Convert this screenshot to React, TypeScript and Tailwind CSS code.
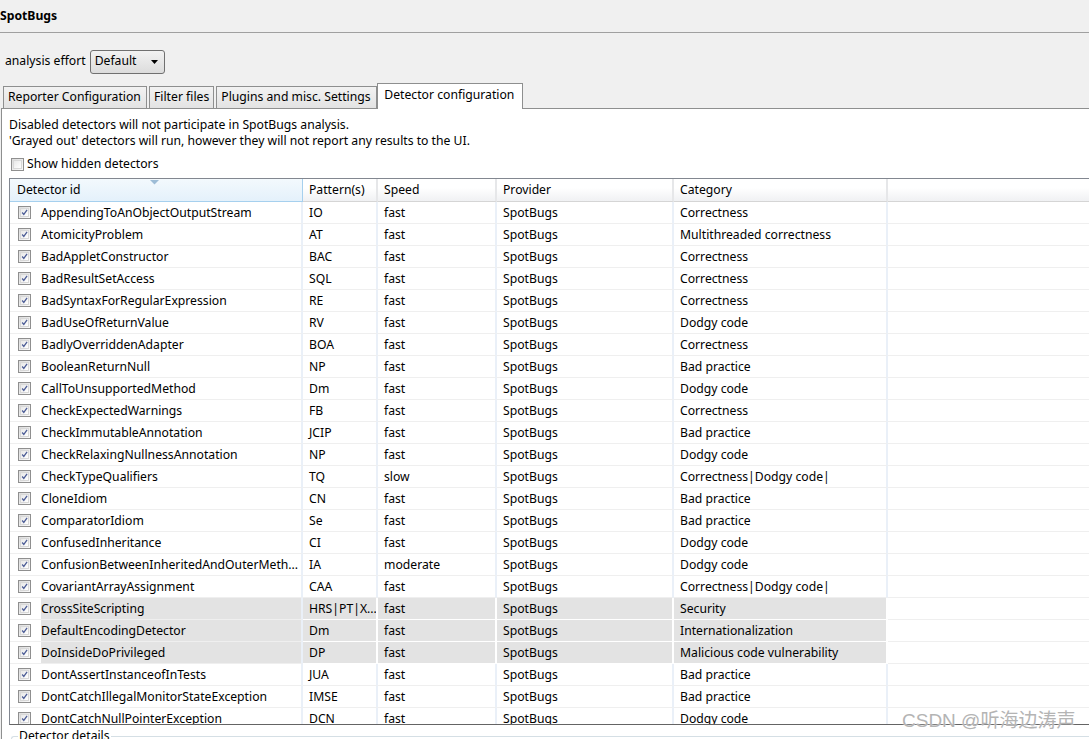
import React from 'react'

type Row = {
  id: string
  pattern: string
  speed: string
  category: string
  grayed?: boolean
}

const rows: Row[] = [
  { id: 'AppendingToAnObjectOutputStream', pattern: 'IO', speed: 'fast', category: 'Correctness' },
  { id: 'AtomicityProblem', pattern: 'AT', speed: 'fast', category: 'Multithreaded correctness' },
  { id: 'BadAppletConstructor', pattern: 'BAC', speed: 'fast', category: 'Correctness' },
  { id: 'BadResultSetAccess', pattern: 'SQL', speed: 'fast', category: 'Correctness' },
  { id: 'BadSyntaxForRegularExpression', pattern: 'RE', speed: 'fast', category: 'Correctness' },
  { id: 'BadUseOfReturnValue', pattern: 'RV', speed: 'fast', category: 'Dodgy code' },
  { id: 'BadlyOverriddenAdapter', pattern: 'BOA', speed: 'fast', category: 'Correctness' },
  { id: 'BooleanReturnNull', pattern: 'NP', speed: 'fast', category: 'Bad practice' },
  { id: 'CallToUnsupportedMethod', pattern: 'Dm', speed: 'fast', category: 'Dodgy code' },
  { id: 'CheckExpectedWarnings', pattern: 'FB', speed: 'fast', category: 'Correctness' },
  { id: 'CheckImmutableAnnotation', pattern: 'JCIP', speed: 'fast', category: 'Bad practice' },
  { id: 'CheckRelaxingNullnessAnnotation', pattern: 'NP', speed: 'fast', category: 'Dodgy code' },
  { id: 'CheckTypeQualifiers', pattern: 'TQ', speed: 'slow', category: 'Correctness|Dodgy code|' },
  { id: 'CloneIdiom', pattern: 'CN', speed: 'fast', category: 'Bad practice' },
  { id: 'ComparatorIdiom', pattern: 'Se', speed: 'fast', category: 'Bad practice' },
  { id: 'ConfusedInheritance', pattern: 'CI', speed: 'fast', category: 'Dodgy code' },
  { id: 'ConfusionBetweenInheritedAndOuterMeth...', pattern: 'IA', speed: 'moderate', category: 'Dodgy code' },
  { id: 'CovariantArrayAssignment', pattern: 'CAA', speed: 'fast', category: 'Correctness|Dodgy code|' },
  { id: 'CrossSiteScripting', pattern: 'HRS|PT|X...', speed: 'fast', category: 'Security', grayed: true },
  { id: 'DefaultEncodingDetector', pattern: 'Dm', speed: 'fast', category: 'Internationalization', grayed: true },
  { id: 'DoInsideDoPrivileged', pattern: 'DP', speed: 'fast', category: 'Malicious code vulnerability', grayed: true },
  { id: 'DontAssertInstanceofInTests', pattern: 'JUA', speed: 'fast', category: 'Bad practice' },
  { id: 'DontCatchIllegalMonitorStateException', pattern: 'IMSE', speed: 'fast', category: 'Bad practice' },
  { id: 'DontCatchNullPointerException', pattern: 'DCN', speed: 'fast', category: 'Dodgy code' },
]

function Check({ checked }: { checked: boolean }) {
  return (
    <span className="flex h-[13px] w-[13px] shrink-0 items-center justify-center border border-[#8f8f8f] bg-gradient-to-br from-[#dcdcdc] to-[#fbfbfb]">
      <span className="flex h-[9px] w-[9px] items-center justify-center border border-[#d8d8d8] bg-gradient-to-br from-[#e8e8e8] to-white">
        {checked && (
          <svg width="9" height="9" viewBox="0 0 9 9" className="-mt-px">
            <path d="M1.5 4.5 L3.6 7 L7.8 1" fill="none" stroke="#4c5c96" strokeWidth="1.6" />
          </svg>
        )}
      </span>
    </span>
  )
}

const cols = 'grid grid-cols-[293px_75px_119px_177px_214px_1fr]'

function HeaderCell({ children, sorted }: { children: React.ReactNode; sorted?: boolean }) {
  if (sorted) {
    return (
      <div className="relative flex h-[23px] items-center border-r border-b border-[#a6d0ee] bg-gradient-to-b from-[#f3f9fd] to-[#e4f1fb] pl-[7px]">
        {children}
        <svg className="absolute left-[140px] top-[1px]" width="9" height="5" viewBox="0 0 9 5">
          <path d="M0 0 H9 L4.5 4.5 Z" fill="#9dbcd6" />
        </svg>
      </div>
    )
  }
  return (
    <div className="flex h-[23px] items-center border-r-2 border-b border-r-[#e6e7e9] border-b-[#d5d5d5] bg-gradient-to-b from-white from-40% to-[#f0f1f3] pl-[6px]">
      {children}
    </div>
  )
}

function Cell({ children, grayed, first }: { children?: React.ReactNode; grayed?: boolean; first?: boolean }) {
  return (
    <div
      className={`flex h-[22px] items-center overflow-hidden whitespace-nowrap border-r-2 border-b border-r-[#eaf0f8] border-b-[#efefef] ${
        first ? 'pl-[8px]' : 'pl-[6px]'
      } ${grayed && !first ? 'bg-[#e3e3e3] border-r-white border-b-white' : ''}`}
    >
      {children}
    </div>
  )
}

const tab =
  'flex h-[22px] shrink-0 items-center whitespace-nowrap border border-b-0 border-[#8e8f8f] bg-gradient-to-b from-[#f2f2f2] to-[#e3e3e3]'

export default function App() {
  return (
    <div className="relative h-[739px] w-[1089px] overflow-hidden bg-[#f0f0f0] font-['Noto_Sans','Noto_Sans_CJK_SC',sans-serif] text-[12.2px] text-black">
      <div className="flex h-[33px] items-center border-b border-[#a0a0a0] font-bold">SpotBugs</div>

      <div className="flex h-[52px] items-center gap-[4px] pl-[5px] pt-[5px]">
        <span>analysis effort</span>
        <div className="flex h-[24px] w-[75px] items-center justify-between rounded-[3px] border border-[#707070] bg-gradient-to-b from-[#f2f2f2] to-[#dcdcdc] pl-[4px] pr-[6px]">
          <span>Default</span>
          <svg width="7" height="4" viewBox="0 0 7 4">
            <path d="M0 0 H7 L3.5 4 Z" fill="#000" />
          </svg>
        </div>
      </div>

      <div className="flex h-[23px] items-end pl-[3px]">
        <div className={`${tab} w-[144px] px-[4px]`}>Reporter Configuration</div>
        <div className={`${tab} ml-[2px] px-[4px]`}>Filter files</div>
        <div className={`${tab} ml-[2px] w-[161px] px-[4px]`}>Plugins and misc. Settings</div>
        <div className="relative -mb-px flex h-[26px] w-[146px] shrink-0 items-center whitespace-nowrap border border-b-0 border-[#8e8f8f] bg-white px-[6px] pb-[3px]">
          Detector configuration
        </div>
      </div>

      <div className="ml-[1px] h-[631px] border-t border-l border-[#8e8f8f] bg-white pl-[7px] pt-[8px]">
        <div className="leading-[16px]">Disabled detectors will not participate in SpotBugs analysis.</div>
        <div className="leading-[16px]">'Grayed out' detectors will run, however they will not report any results to the UI.</div>
        <div className="mt-[6px] flex items-center gap-[3px] pl-[2px]">
          <Check checked={false} />
          <span>Show hidden detectors</span>
        </div>

        <div className="mt-[5px] h-[547px] overflow-hidden border-t border-l border-b border-t-[#828790] border-l-[#828790] border-b-[#646464] bg-white">
          <div className={cols}>
            <HeaderCell sorted>Detector id</HeaderCell>
            <HeaderCell>Pattern(s)</HeaderCell>
            <HeaderCell>Speed</HeaderCell>
            <HeaderCell>Provider</HeaderCell>
            <HeaderCell>Category</HeaderCell>
            <div className="h-[23px] border-b border-[#d5d5d5] bg-gradient-to-b from-white from-40% to-[#f0f1f3]" />
          </div>
          {rows.map((r) => (
            <div key={r.id} className={cols}>
              <Cell first>
                <Check checked />
                <span className={`ml-[10px] flex h-full flex-1 items-center ${r.grayed ? 'bg-[#e3e3e3]' : ''}`}>
                  {r.id}
                </span>
              </Cell>
              <Cell grayed={r.grayed}>{r.pattern}</Cell>
              <Cell grayed={r.grayed}>{r.speed}</Cell>
              <Cell grayed={r.grayed}>SpotBugs</Cell>
              <Cell grayed={r.grayed}>{r.category}</Cell>
              <div className="h-[22px] border-b border-[#efefef]" />
            </div>
          ))}
        </div>

        <div className="relative mt-[11px] ml-[2px] h-[20px] rounded-tl-[3px] border-t border-l border-[#d5dfe5]">
          <span className="absolute -top-[9px] left-[6px] bg-white px-[1px] leading-[16px]">Detector details</span>
        </div>
      </div>

      <div className="absolute left-[902px] top-[707px] font-['Liberation_Sans','Noto_Sans_CJK_SC',sans-serif] text-[19px] text-[#b4b4b4] [text-shadow:0_0_2px_#fff]">
        CSDN @听海边涛声
      </div>
    </div>
  )
}
